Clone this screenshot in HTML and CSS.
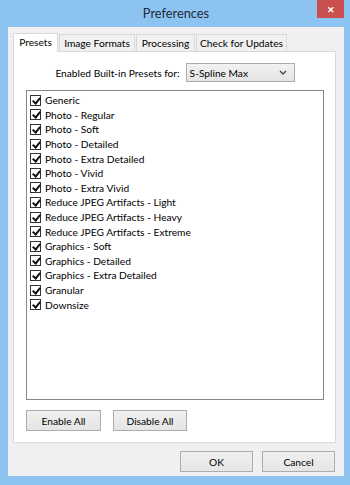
FILE: index.html
```html
<!DOCTYPE html>
<html lang="en">

<head>
    <meta charset="UTF-8">
    <title>Preferences</title>
    <link rel="stylesheet" href="styles.css">
</head>

<body>
    <div class="window">
        <div class="titlebar">
            <span class="title">Preferences</span>
            <span class="close">&#x2715;</span>
        </div>

        <div class="client">
            <div class="tabs">
                <div class="tab active tab-presets">Presets</div>
                <div class="tab tab-formats">Image Formats</div>
                <div class="tab tab-processing">Processing</div>
                <div class="tab tab-updates">Check for Updates</div>
            </div>

            <div class="panel">
                <div class="preset-row">
                    <span>Enabled Built-in Presets for:</span>
                    <div class="select">
                        <span>S-Spline Max</span>
                        <svg width="8" height="5" viewBox="0 0 8 5"><path d="M1 1 L4 4 L7 1" fill="none" stroke="#444" stroke-width="1.3"/></svg>
                    </div>
                </div>

                <ul class="list">
                    <li><span class="check"></span>Generic</li>
                    <li><span class="check"></span>Photo - Regular</li>
                    <li><span class="check"></span>Photo - Soft</li>
                    <li><span class="check"></span>Photo - Detailed</li>
                    <li><span class="check"></span>Photo - Extra Detailed</li>
                    <li><span class="check"></span>Photo - Vivid</li>
                    <li><span class="check"></span>Photo - Extra Vivid</li>
                    <li><span class="check"></span>Reduce JPEG Artifacts - Light</li>
                    <li><span class="check"></span>Reduce JPEG Artifacts - Heavy</li>
                    <li><span class="check"></span>Reduce JPEG Artifacts - Extreme</li>
                    <li><span class="check"></span>Graphics - Soft</li>
                    <li><span class="check"></span>Graphics - Detailed</li>
                    <li><span class="check"></span>Graphics - Extra Detailed</li>
                    <li><span class="check"></span>Granular</li>
                    <li><span class="check"></span>Downsize</li>
                </ul>

                <div class="panel-buttons">
                    <button class="btn btn-enable">Enable All</button>
                    <button class="btn btn-disable">Disable All</button>
                </div>
            </div>

            <div class="dialog-buttons">
                <button class="btn btn-dialog">OK</button>
                <button class="btn btn-dialog">Cancel</button>
            </div>
        </div>
    </div>
</body>

</html>
```

FILE: styles.css
```css
body {
    margin: 0;
    font-family: Lato, "Noto Sans", sans-serif;
    font-size: 10px;
    color: #000;
}

.window {
    width: 350px;
    height: 485px;
    box-sizing: border-box;
    background-color: #8cc3f1;
    padding: 0 6px 9px 8px;
    display: flex;
    flex-direction: column;
}

/* Title bar */

.titlebar {
    position: relative;
    height: 27px;
    display: flex;
    align-items: center;
    justify-content: center;
}

.title {
    font-size: 12.8px;
    color: #222b36;
    margin-top: -1px;
}

.close {
    position: absolute;
    top: 0;
    right: 0;
    width: 27px;
    height: 18px;
    background-color: #c9504e;
    color: white;
    font-size: 9px;
    font-weight: bold;
    display: flex;
    align-items: center;
    justify-content: center;
}

/* Client area */

.client {
    flex: 1;
    background-color: #f0f0f0;
    padding: 6px 8px 0 5px;
    display: flex;
    flex-direction: column;
}

.tabs {
    display: flex;
    align-items: flex-end;
    height: 18px;
    position: relative;
    z-index: 1;
}

.tab {
    height: 17px;
    box-sizing: border-box;
    margin-right: 1px;
    border: 1px solid #d9d9d9;
    border-bottom: none;
    background-color: #f0f0f0;
    display: flex;
    align-items: center;
    justify-content: center;
    white-space: nowrap;
    font-size: 10.2px;
}

.tab.active {
    height: 19px;
    background-color: white;
    padding-bottom: 2px;
    margin-bottom: -1px;
}

.tab-presets {
    width: 45px;
}

.tab-formats {
    width: 76px;
}

.tab-processing {
    width: 59px;
}

.tab-updates {
    width: 91px;
}

.panel {
    width: 323px;
    height: 392px;
    box-sizing: border-box;
    background-color: white;
    border: 1px solid #d9d9d9;
    padding: 0 11px 0 12px;
    display: flex;
    flex-direction: column;
}

.preset-row {
    display: flex;
    align-items: center;
    justify-content: center;
    gap: 6px;
    margin-top: 11px;
    font-size: 10.2px;
}

.select {
    width: 109px;
    height: 19px;
    box-sizing: border-box;
    border: 1px solid #acacac;
    background: linear-gradient(#f2f2f2, #e5e5e5);
    display: flex;
    align-items: center;
    justify-content: space-between;
    padding: 0 7px 0 3px;
}

/* Preset list */

.list {
    list-style: none;
    margin: 8px 0 0 0;
    padding: 2px 0 0 3px;
    height: 310px;
    box-sizing: border-box;
    border: 1px solid #828790;
}

.list li {
    height: 14.6px;
    display: flex;
    align-items: center;
    font-size: 10.2px;
}

.check {
    width: 11px;
    height: 11px;
    box-sizing: border-box;
    border: 1px solid #333;
    background-color: white;
    margin-right: 4px;
    position: relative;
}

.check::after {
    content: "";
    position: absolute;
    left: 3px;
    top: 0px;
    width: 3px;
    height: 6px;
    border-right: 2px solid #111;
    border-bottom: 2px solid #111;
    transform: rotate(40deg);
}

/* Buttons */

.btn {
    font-family: inherit;
    font-size: 10.2px;
    color: #000;
    height: 21px;
    border: 1px solid #acacac;
    background: linear-gradient(#f0f0f0, #e5e5e5);
    padding: 0;
}

.panel-buttons {
    display: flex;
    gap: 12px;
    margin-top: 10px;
}

.btn-enable {
    width: 75px;
}

.btn-disable {
    width: 74px;
}

.dialog-buttons {
    display: flex;
    justify-content: flex-end;
    gap: 9px;
    margin-top: 8px;
    padding-right: 1px;
}

.btn-dialog {
    width: 73px;
}
```
